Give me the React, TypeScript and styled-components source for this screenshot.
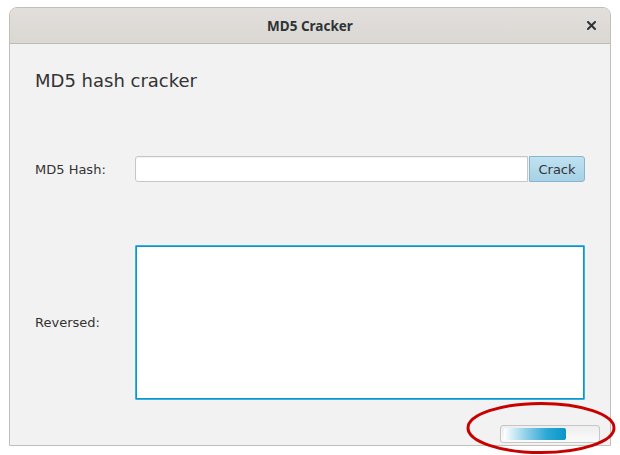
import React from "react";
import styled, { createGlobalStyle } from "styled-components";

const Global = createGlobalStyle`
  html, body { margin: 0; padding: 0; background: #ffffff; }
  body { font-family: "DejaVu Sans", sans-serif; }
`;

const Page = styled.div`
  position: relative;
  width: 620px;
  height: 455px;
  padding: 7px 0 0 9px;
  box-sizing: border-box;
`;

const Window = styled.div`
  width: 602px;
  height: 439px;
  box-sizing: border-box;
  border: 1px solid #c2bfbb;
  border-radius: 8px 8px 0 0;
  background: #f2f2f2;
  display: flex;
  flex-direction: column;
  overflow: hidden;
`;

const TitleBar = styled.div`
  position: relative;
  height: 36px;
  flex: none;
  display: flex;
  align-items: center;
  justify-content: center;
  background: linear-gradient(#e1dedb, #dbd8d4);
  border-bottom: 1px solid #bfbcb8;
  box-sizing: border-box;
`;

const Title = styled.div`
  font-family: "Noto Sans", sans-serif;
  font-weight: 700;
  font-size: 13.5px;
  color: #2e3436;
`;

const Close = styled.div`
  position: absolute;
  right: 12px;
  top: 10px;
  width: 14px;
  height: 14px;
  display: flex;
  align-items: center;
  justify-content: center;
`;

const Body = styled.div`
  flex: 1;
  display: flex;
  flex-direction: column;
  padding: 26px 10px 0 25px;
`;

const Heading = styled.div`
  font-size: 18px;
  line-height: 21px;
  color: #333333;
  margin-right: 15px;
`;

const Form = styled.div`
  display: grid;
  grid-template-columns: 100px 1fr;
  grid-template-rows: 26px 155px;
  row-gap: 63px;
  margin-top: 65px;
  margin-right: 15px;
  align-items: center;
`;

const Label = styled.div`
  font-size: 13px;
  color: #333333;
`;

const HashRow = styled.div`
  display: flex;
  height: 26px;
`;

const Field = styled.div`
  flex: 1;
  box-sizing: border-box;
  background: #ffffff;
  border: 1px solid #c6c6c6;
  border-radius: 3px 0 0 3px;
  box-shadow: inset 0 1px 1px rgba(0, 0, 0, 0.06);
`;

const Button = styled.button`
  width: 56px;
  box-sizing: border-box;
  border: 1px solid #8ab4c9;
  border-radius: 0 3px 3px 0;
  background: linear-gradient(#c0e2f1, #a6d1e6);
  font-family: "DejaVu Sans", sans-serif;
  font-size: 13px;
  color: #333333;
  padding: 0;
  margin-left: 1px;
`;

const TextArea = styled.div`
  height: 155px;
  box-sizing: border-box;
  background: #ffffff;
  border: 1px solid #3bb0dc;
  box-shadow: inset 0 0 0 1px #0a96c9;
  border-radius: 1px;
`;

const Footer = styled.div`
  display: flex;
  justify-content: flex-end;
  margin-top: 25px;
`;

const Progress = styled.div`
  width: 100px;
  height: 18px;
  box-sizing: border-box;
  border: 1px solid #c6c6c6;
  border-radius: 3px;
  background: linear-gradient(#eeeeee, #fbfbfb);
  padding: 2px 3px;
  display: flex;
`;

const Fill = styled.div`
  width: 62px;
  border-radius: 2px;
  background: linear-gradient(to right, #ffffff 0%, #8fd0e8 35%, #2aa8d4 70%, #0a96c8 100%);
`;

const Annotation = styled.svg`
  position: absolute;
  left: 462px;
  top: 398px;
  pointer-events: none;
`;

export default function App() {
  return (
    <>
      <Global />
      <Page>
        <Window>
          <TitleBar>
            <Title>MD5 Cracker</Title>
            <Close>
              <svg width="9" height="9" viewBox="0 0 9 9">
                <path d="M1 1 L8 8 M8 1 L1 8" stroke="#2e3436" strokeWidth="2" strokeLinecap="square" />
              </svg>
            </Close>
          </TitleBar>
          <Body>
            <Heading>MD5 hash cracker</Heading>
            <Form>
              <Label>MD5 Hash:</Label>
              <HashRow>
                <Field />
                <Button>Crack</Button>
              </HashRow>
              <Label>Reversed:</Label>
              <TextArea />
            </Form>
            <Footer>
              <Progress>
                <Fill />
              </Progress>
            </Footer>
          </Body>
        </Window>
        <Annotation width="158" height="60" viewBox="0 0 158 60">
          <ellipse cx="79" cy="30" rx="73" ry="24.5" fill="none" stroke="#c80000" strokeWidth="3" />
        </Annotation>
      </Page>
    </>
  );
}
